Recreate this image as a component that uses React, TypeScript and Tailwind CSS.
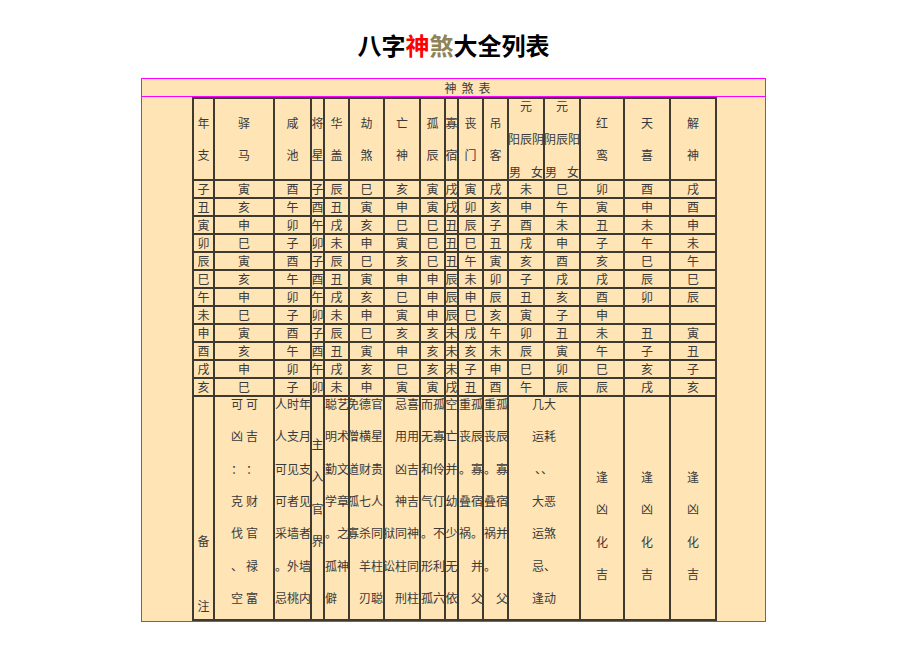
const heads: string[][] = [
  ["年", "支"],
  ["驿", "马"],
  ["咸", "池"],
  ["将", "星"],
  ["华", "盖"],
  ["劫", "煞"],
  ["亡", "神"],
  ["孤", "辰"],
  ["寡", "宿"],
  ["丧", "门"],
  ["吊", "客"],
  ["元", "阳辰阴"],
  ["元", "阴辰阳"],
  ["红", "鸾"],
  ["天", "喜"],
  ["解", "神"],
];

const rows = [
  "子寅酉子辰巳亥寅戌寅戌未巳卯酉戌",
  "丑亥午酉丑寅申寅戌卯亥申午寅申酉",
  "寅申卯午戌亥巳巳丑辰子酉未丑未申",
  "卯巳子卯未申寅巳丑巳丑戌申子午未",
  "辰寅酉子辰巳亥巳丑午寅亥酉亥巳午",
  "巳亥午酉丑寅申申辰未卯子戌戌辰巳",
  "午申卯午戌亥巳申辰申辰丑亥酉卯辰",
  "未巳子卯未申寅申辰巳亥寅子申",
  "申寅酉子辰巳亥亥未戌午卯丑未丑寅",
  "酉亥午酉丑寅申亥未亥未辰寅午子丑",
  "戌申卯午戌亥巳亥未子申巳卯巳亥子",
  "亥巳子卯未申寅寅戌丑酉午辰辰戌亥",
];

// 备注 row, one entry per column (元辰 columns merged)
const notes: { lines: string[]; align: string; pad?: string; span?: boolean }[] = [
  { lines: ["人时年", "人支月", "可见支", "可者见", "采墙者", "。外墙", "忌桃内"], align: "items-start" },
  { lines: ["主", "入", "官", "界"], align: "items-center", pad: "pt-[40px]" },
  { lines: ["聪艺", "明术", "勤文", "学章", "。之", "孤神", "僻"], align: "items-start" },
  { lines: ["免德官", "僧横星", "道财贵", "孤七人", "寡杀同", "羊柱", "刃聪"], align: "items-end" },
  { lines: ["忌喜", "用用", "凶吉", "神吉", "狱同神", "讼柱同", "刑柱"], align: "items-end" },
  { lines: ["而孤", "无寡", "和伶", "气仃", "。不", "形利", "孤六"], align: "items-start" },
  { lines: ["空", "亡", "并", "幼", "少", "无", "依"], align: "items-center" },
  { lines: ["重孤", "丧辰", "。寡", "叠宿", "祸。", "　并", "　父"], align: "items-start" },
  { lines: ["重孤", "丧辰", "。寡", "叠宿", "祸并", "。", "　父"], align: "items-start" },
  { lines: ["几大", "运耗", "、、", "大恶", "运煞", "忌、", "逢动"], align: "items-center", span: true },
  { lines: ["逢", "凶", "化", "吉"], align: "items-center", pad: "pt-[73px]" },
  { lines: ["逢", "凶", "化", "吉"], align: "items-center", pad: "pt-[73px]" },
  { lines: ["逢", "凶", "化", "吉"], align: "items-center", pad: "pt-[73px]" },
];

const yima = [
  ["可", "可"],
  ["凶", "吉"],
  ["：", "："],
  ["克", "财"],
  ["伐", "官"],
  ["、", "禄"],
  ["空", "富"],
];

function HeadCell({ h }: { h: string[] }) {
  if (h[0] === "元") {
    return (
      <div className="flex flex-col items-center justify-between bg-[#ffe4b5] leading-[14px]">
        <span>元</span>
        <span className="whitespace-nowrap">{h[1]}</span>
        <span className="flex w-full justify-between">
          <span>男</span>
          <span>女</span>
        </span>
      </div>
    );
  }
  return (
    <div className="flex items-center justify-center bg-[#ffe4b5]">
      <div className="flex flex-col items-center leading-[32px]">
        <span>{h[0]}</span>
        <span>{h[1]}</span>
      </div>
    </div>
  );
}

export default function App() {
  return (
    <div className="min-h-[651px] w-[920px] bg-white pt-[31px] font-['Noto_Sans_CJK_SC','Noto_Sans_CJK_JP',sans-serif]">
      <h1 className="ml-[141px] w-[625px] text-center text-[24px] font-bold leading-[28px] text-black">
        八字<span className="text-[#ff0000]">神</span>
        <span className="text-[#8f8456]">煞</span>大全列表
      </h1>

      <div className="ml-[141px] mt-[19px] w-[625px] border border-[#ff00ff] bg-[#ffe4b5] text-[12px] text-[#3a3a3a]">
        <div className="flex h-[18px] items-center justify-center gap-[5px] border-b border-[#ff00ff] pl-[28px] leading-[14px]">
          <span>神</span>
          <span>煞</span>
          <span>表</span>
        </div>

        <div className="flex">
          <div className="w-[50px] shrink-0" />
          <div className="grid grid-cols-[19px_58px_35px_11px_23px_33px_34px_23px_11px_23px_23px_34px_34px_42px_44px_44px] grid-rows-[80px_repeat(12,16px)_222px] gap-[2px] bg-[#3f3a30] p-[2px]">
            {heads.map((h, i) => (
              <HeadCell key={"h" + i} h={h} />
            ))}

            {rows.map((r, ri) =>
              Array.from({ length: 16 }).map((_, ci) => (
                <div
                  key={ri + "-" + ci}
                  className="flex items-center justify-center bg-[#ffe4b5] leading-[16px]"
                >
                  {r[ci] ?? ""}
                </div>
              ))
            )}

            <div className="flex flex-col items-center gap-[51px] bg-[#ffe4b5] pt-[137px] leading-[14px]">
              <span>备</span>
              <span>注</span>
            </div>
            <div className="flex flex-col gap-[18.33px] bg-[#ffe4b5] leading-[14px]">
              {yima.map((p, i) => (
                <div key={i} className="flex justify-center gap-[3px] pl-[1px]">
                  <span>{p[0]}</span>
                  <span>{p[1]}</span>
                </div>
              ))}
            </div>
            {notes.map((n, i) => (
              <div
                key={"n" + i}
                className={`flex flex-col gap-[18.33px] bg-[#ffe4b5] leading-[14px] ${n.align} ${n.pad ?? ""} ${n.span ? "col-span-2" : ""}`}
              >
                {n.lines.map((l, j) => (
                  <span key={j} className="whitespace-nowrap">
                    {l}
                  </span>
                ))}
              </div>
            ))}
          </div>
        </div>
      </div>
    </div>
  );
}
